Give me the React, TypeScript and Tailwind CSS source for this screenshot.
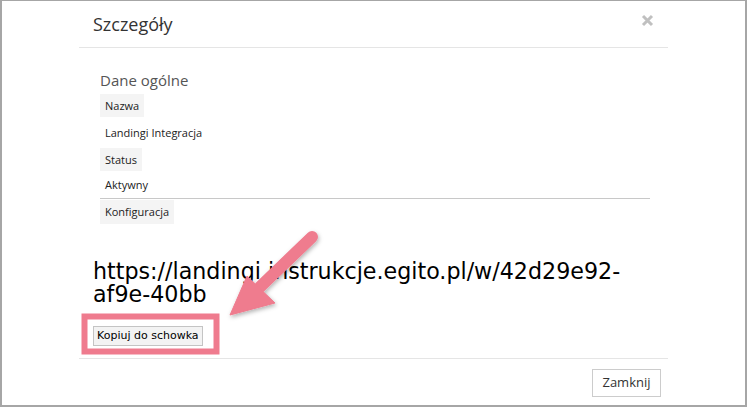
import React from "react";

export default function App() {
  return (
    <div className="relative w-[747px] h-[407px] bg-white border-[#a6a6a6] border-l-2 border-r-2 border-b-2 border-t overflow-hidden">
      <div className="ml-[77px] w-[589px] h-full flex flex-col font-['Open_Sans',sans-serif] text-[#333]">
        {/* header */}
        <div className="h-[47px] shrink-0 border-b border-[#e5e5e5] pl-[14px] pr-[14px] flex items-center justify-between">
          <div className="text-[18px] leading-[24px] text-[#333]">Szczegóły</div>
          <svg width="13" height="13" viewBox="0 0 13 13" className="-mt-[7px]">
            <path d="M2 2 L11 11 M11 2 L2 11" stroke="#c0c0c0" strokeWidth="3" strokeLinecap="butt" />
          </svg>
        </div>
        {/* body */}
        <div className="flex-1 px-[14px] flex flex-col">
          <div className="pl-[7px] pr-[4px] pt-[21px]">
            <div className="text-[15px] leading-[22px] text-[#555] mb-[3px]">Dane ogólne</div>
            <div className="flex flex-col text-[11px] leading-[14px] text-[#222]">
              <div className="h-[23px] flex items-center self-start bg-[#f4f4f4] px-[5px]">Nazwa</div>
              <div className="h-[31px] flex items-center px-[5px]">Landingi Integracja</div>
              <div className="h-[23px] flex items-center self-start bg-[#f4f4f4] px-[5px]">Status</div>
              <div className="h-[28px] flex items-center px-[5px] border-b border-[#c8c8c8]">Aktywny</div>
              <div className="h-[24px] flex items-center self-start bg-[#f4f4f4] px-[5px] mt-[1px]">Konfiguracja</div>
            </div>
          </div>
          <div className="mt-[36px] font-['DejaVu_Sans',sans-serif] text-[22.2px] leading-[23px] text-black break-words">
            https://landingi.instrukcje.egito.pl/w/42d29e92-af9e-40bb
          </div>
          <div className="mt-[15px]">
            <button className="h-[20px] px-[3px] border border-[#c4c4c4] bg-[#f3f3f3] font-['DejaVu_Sans',sans-serif] text-[11px] leading-[14px] text-black">
              Kopiuj do schowka
            </button>
          </div>
        </div>
        {/* footer */}
        <div className="h-[47px] shrink-0 border-t border-[#e5e5e5] flex items-start justify-end pt-[10px] pr-[7px]">
          <button className="h-[28px] w-[69px] border border-[#cccccc] bg-white text-[13px] text-[#333]">Zamknij</button>
        </div>
      </div>

      {/* annotation overlay */}
      <svg className="absolute left-0 top-0 pointer-events-none" width="747" height="407" viewBox="0 0 747 407">
        <defs>
          <filter id="sh" x="-20%" y="-20%" width="140%" height="140%">
            <feDropShadow dx="1" dy="2" stdDeviation="2" floodColor="#000" floodOpacity="0.3" />
          </filter>
        </defs>
        <rect x="82.5" y="315.5" width="132" height="35" fill="none" stroke="#ef7b8e" strokeWidth="6" />
        <g filter="url(#sh)" fill="#ef7b8e" stroke="#ef7b8e">
          <line x1="310" y1="236" x2="258" y2="286" strokeWidth="12" strokeLinecap="round" />
          <polygon points="228,314 245,275 273,302" strokeWidth="1" strokeLinejoin="round" />
        </g>
      </svg>
    </div>
  );
}
